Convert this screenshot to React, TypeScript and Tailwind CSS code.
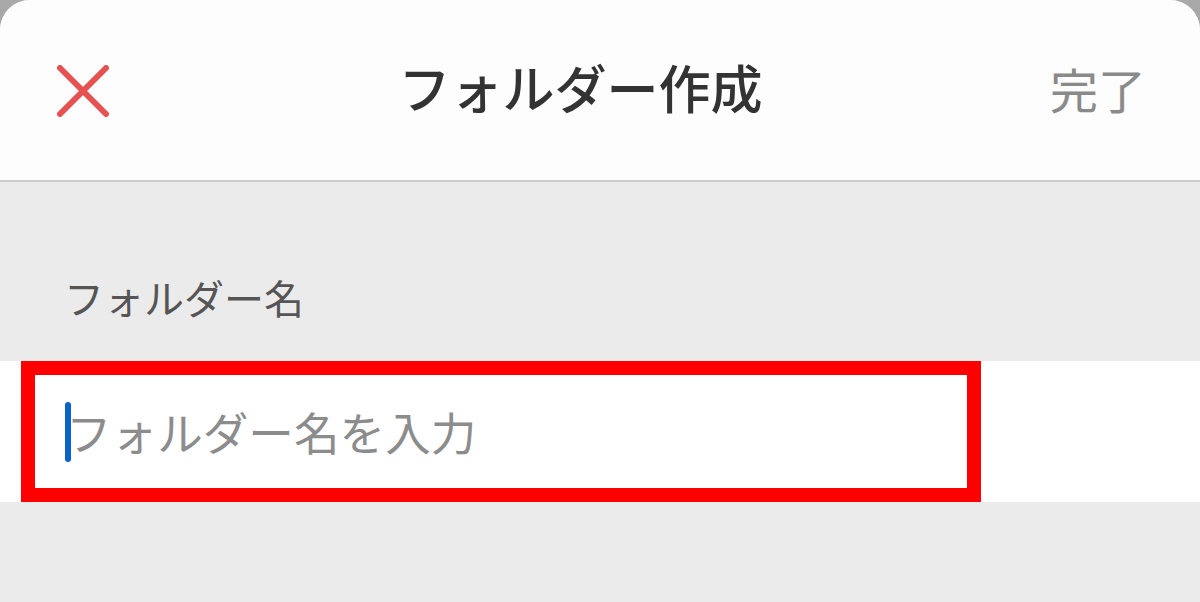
import React from "react";

const jp = { fontFamily: '"Noto Sans CJK JP", "Noto Sans", sans-serif' };

export default function App() {
  return (
    <div className="w-[1200px] h-[602px] bg-[#a8a8a8] overflow-hidden" style={jp}>
      <div className="h-full flex flex-col rounded-t-[30px] overflow-hidden bg-[#ebebeb]">
        <header className="h-[182px] shrink-0 bg-[#fdfdfd] border-b-2 border-[#cbcbcb] flex items-center justify-between pl-[57px] pr-[54px]">
          <button className="w-[52px] h-[52px] flex items-center justify-center mt-[2px]">
            <svg width="52" height="52" viewBox="0 0 52 52">
              <path
                d="M3 3 L49 49 M49 3 L3 49"
                stroke="#e65252"
                strokeWidth="6"
                strokeLinecap="round"
              />
            </svg>
          </button>
          <h1 className="text-[52px] font-medium text-[#333333] -mt-[6px] ml-[2px]">
            フォルダー作成
          </h1>
          <span className="text-[48px] text-[#8a8a8a] -mt-[4px]">完了</span>
        </header>

        <div className="h-[179px] shrink-0 flex items-end pb-[44px] pl-[64px]">
          <span className="text-[40px] leading-none text-[#555555]">フォルダー名</span>
        </div>

        <div className="h-[141px] shrink-0 bg-white">
          <div className="ml-[21px] w-[960px] h-[141px] border-[14px] border-[#ff0000] flex items-center pl-[30px]">
            <span className="w-[6px] h-[60px] rounded-full bg-[#0a64c8] shrink-0" />
            <span className="text-[45.6px] leading-none text-[#8c8c8c] -ml-[5px]">
              フォルダー名を入力
            </span>
          </div>
        </div>

        <div className="flex-1" />
      </div>
    </div>
  );
}
